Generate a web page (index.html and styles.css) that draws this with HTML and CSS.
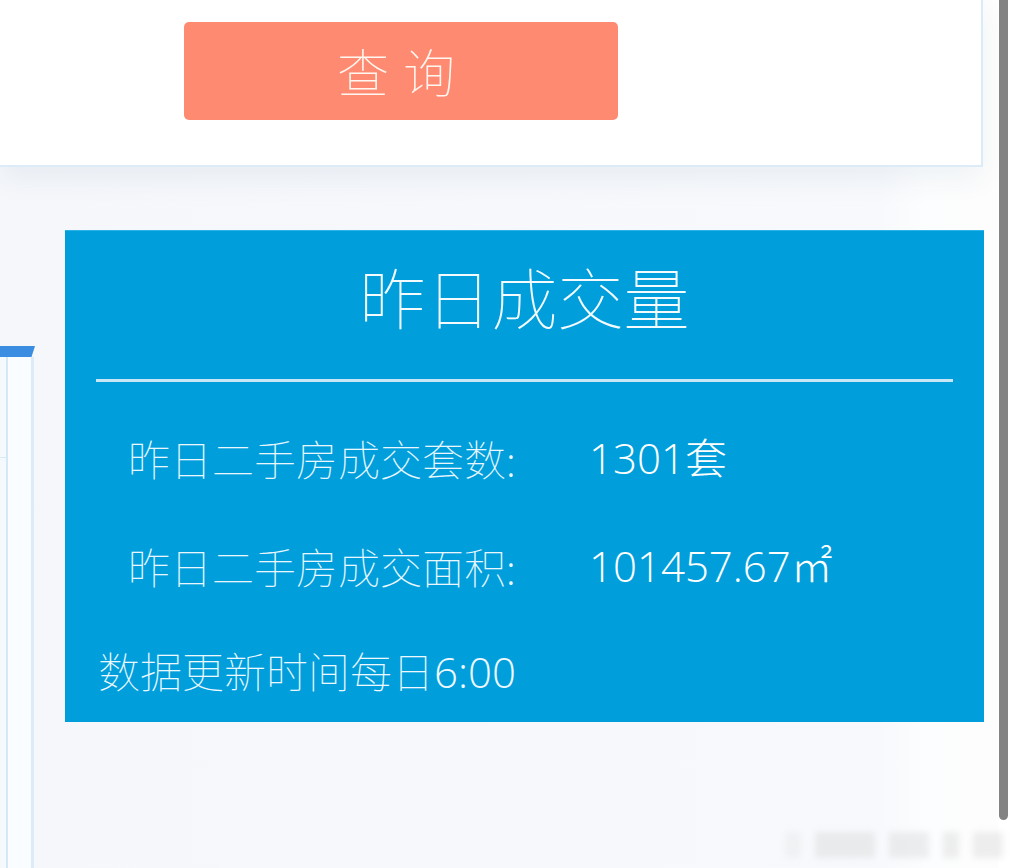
FILE: index.html
```html
<!DOCTYPE html>
<html lang="zh-CN">
<head>
<meta charset="utf-8">
<title>昨日成交量</title>
<link rel="stylesheet" href="styles.css">
</head>
<body>
<div class="app">
  <div class="query-card">
    <button class="query-btn" type="button">查询</button>
  </div>
  <div class="content">
    <div class="side">
      <div class="side-bar"></div>
      <div class="side-box">
        <div class="side-inner"></div>
      </div>
    </div>
    <section class="panel">
      <h1 class="panel-title">昨日成交量</h1>
      <div class="panel-line"></div>
      <div class="stats">
        <div class="stat-row">
          <span class="stat-label">昨日二手房成交套数:</span>
          <span class="stat-value">1301套</span>
        </div>
        <div class="stat-row">
          <span class="stat-label">昨日二手房成交面积:</span>
          <span class="stat-value">101457.67㎡</span>
        </div>
      </div>
      <div class="panel-note">数据更新时间每日<span class="num">6:00</span></div>
    </section>
  </div>
  <div class="watermark">
    <span class="wm wm-a"></span><span class="wm wm-b"></span><span class="wm wm-c"></span><span class="wm wm-d"></span><span class="wm wm-e"></span>
  </div>
</div>
<div class="scrollbar"></div>
</body>
</html>
```

FILE: styles.css
```css
html, body {
  margin: 0;
  padding: 0;
  width: 1017px;
  height: 868px;
  overflow: hidden;
  background: #ffffff;
  font-family: "Liberation Sans", "Noto Sans CJK SC", sans-serif;
}

.app {
  position: relative;
  width: 998px;
  height: 868px;
  background: linear-gradient(to right, #f5f7fb 0px, #f7f9fc 880px, #fcfdfe 925px, #fdfdfd 998px);
}

.query-card {
  box-sizing: border-box;
  width: 983px;
  height: 167px;
  background: #ffffff;
  border-right: 2px solid #dcebf8;
  border-bottom: 2px solid #dcebf8;
  box-shadow: 0 12px 28px rgba(20, 60, 110, 0.06);
  padding-top: 22px;
  padding-left: 184px;
}

.query-btn {
  display: block;
  width: 434px;
  height: 98px;
  border: none;
  border-radius: 5px;
  background: #ff8a72;
  color: #fff7ef;
  font-family: "Noto Sans CJK SC", sans-serif;
  font-weight: 100;
  font-size: 52px;
  letter-spacing: 14px;
  text-indent: 4px;
  padding: 0;
  line-height: 98px;
}

.content {
  display: flex;
  align-items: flex-start;
  margin-top: 63px;
}

.side {
  width: 35px;
  margin-top: 116px;
}

.side-bar {
  height: 11px;
  background: #3a8de0;
  clip-path: polygon(0 0, 100% 0, 90% 100%, 0 100%);
}

.side-box {
  box-sizing: border-box;
  width: 34px;
  height: 520px;
  background: #fafdff;
  border-right: 3px solid #dbebf7;
}

.side-inner {
  box-sizing: border-box;
  width: 8px;
  height: 100%;
  background: #f4f9fd;
  border-right: 2px solid #d5e8f5;
  background-image: linear-gradient(#dbe9f3, #dbe9f3);
  background-size: 100% 1px;
  background-position: 0 100px;
  background-repeat: no-repeat;
}

.panel {
  box-sizing: border-box;
  width: 919px;
  height: 492px;
  margin-left: 30px;
  background: #009fdc;
  border-top: 1px solid #2bb2e6;
  color: #ffffff;
  padding: 24px 0 0 0;
}

.panel-title {
  margin: 0;
  font-family: "Noto Sans CJK SC", sans-serif;
  font-weight: 100;
  font-size: 66px;
  line-height: 80px;
  text-align: center;
  color: #f4fbff;
}

.panel-line {
  height: 3px;
  margin: 44px 31px 0 31px;
  background: #c7e7f7;
}

.stats {
  padding: 22px 0 0 63px;
}

.stat-row {
  display: flex;
  height: 108px;
  line-height: 108px;
  font-size: 42px;
}

.stat-label {
  width: 461px;
  font-family: "Noto Sans CJK SC", sans-serif;
  font-weight: 100;
  color: #eaf7ff;
}

.stat-value {
  font-family: "Open Sans", "Noto Sans CJK SC", sans-serif;
  font-weight: 300;
  color: #ffffff;
}

.panel-note {
  margin-top: 20px;
  padding-left: 33px;
  font-family: "Noto Sans CJK SC", sans-serif;
  font-size: 42px;
  line-height: 60px;
  font-weight: 100;
  color: #eef9ff;
}

.num {
  font-family: "Open Sans", sans-serif;
  font-weight: 300;
}

.watermark {
  position: absolute;
  left: 785px;
  top: 832px;
  display: flex;
  gap: 14px;
  filter: blur(3px);
  opacity: 0.3;
}

.wm {
  display: block;
  height: 26px;
  background: #c9c9c9;
}
.wm-a { width: 16px; background: #e0e0e0; }
.wm-b { width: 60px; }
.wm-c { width: 40px; }
.wm-d { width: 16px; }
.wm-e { width: 30px; }

.scrollbar {
  position: absolute;
  left: 999px;
  top: 0;
  width: 9px;
  height: 820px;
  background: #838383;
  border-radius: 0 0 5px 5px;
}
```
